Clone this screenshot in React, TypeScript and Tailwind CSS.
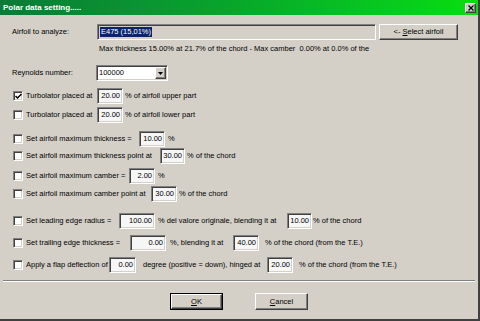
// Polar data setting dialog — classic Windows look
import React from "react";

const sunken =
  "border border-t-[#808080] border-l-[#808080] border-b-white border-r-white shadow-[inset_1px_1px_0_#404040,inset_-1px_-1px_0_#d4d0c8]";
const raised =
  "border border-t-white border-l-white border-b-[#404040] border-r-[#404040] shadow-[inset_-1px_-1px_0_#808080]";

function Check({ on = false }: { on?: boolean }) {
  return (
    <div className={`w-[10px] h-[10px] bg-white shrink-0 flex items-center justify-center ${sunken}`}>
      {on && (
        <svg width="7" height="7" viewBox="0 0 7 7">
          <path d="M0.5 3 L2.5 5 L6.5 1" stroke="#000" strokeWidth="1.5" fill="none" />
        </svg>
      )}
    </div>
  );
}

function NumBox({ value, w }: { value: string; w: number }) {
  return (
    <div
      className={`h-[16px] bg-[#f6f6f6] shrink-0 flex items-center justify-end pr-[2px] ${sunken}`}
      style={{ width: w }}
    >
      {value}
    </div>
  );
}

type Seg = { text: string; w?: number; ml?: number } | { box: string; w: number; ml?: number };

function Row({ on, label, labelW, segs, mt }: { on?: boolean; label: string; labelW: number; segs: Seg[]; mt: number }) {
  return (
    <div className="flex items-center h-[16px] pl-[13px]" style={{ marginTop: mt }}>
      <Check on={on} />
      <span className="ml-[3px] shrink-0 whitespace-nowrap" style={{ width: labelW }}>
        {label}
      </span>
      {segs.map((s, i) =>
        "box" in s ? (
          <div key={i} style={{ marginLeft: s.ml ?? 0 }}>
            <NumBox value={s.box} w={s.w} />
          </div>
        ) : (
          <span key={i} className="shrink-0 whitespace-nowrap" style={{ width: s.w, marginLeft: s.ml ?? 0 }}>
            {s.text}
          </span>
        )
      )}
    </div>
  );
}

export default function App() {
  return (
    <div
      className="w-[480px] h-[321px] bg-[#d4d0c8] text-black text-[7.5px] leading-none border-r-2 border-b-2 border-r-[#404040] border-b-[#404040] overflow-hidden flex flex-col"
      style={{ fontFamily: '"Liberation Sans", Arial, sans-serif' }}
    >
      {/* Title bar */}
      <div className="h-[15px] shrink-0 flex items-center justify-between pl-[3px] pr-[2px] bg-gradient-to-r from-[#0b7a36] via-[#07a82a] to-[#08de0c]">
        <span className="text-white font-bold text-[8px]">Polar data setting.....</span>
        <div className={`w-[11px] h-[10px] bg-[#d4d0c8] flex items-center justify-center ${raised}`}>
          <svg width="6" height="6" viewBox="0 0 6 6">
            <path d="M0.5 0.5 L5.5 5.5 M5.5 0.5 L0.5 5.5" stroke="#000" strokeWidth="1.3" />
          </svg>
        </div>
      </div>

      {/* Airfoil */}
      <div className="flex items-center h-[16px] mt-[9px] pl-[12px]">
        <span className="w-[85px] shrink-0">Airfoil to analyze:</span>
        <div className={`w-[279px] h-[16px] bg-[#d4d0c8] flex items-center pl-[2px] ${sunken}`}>
          <span className="bg-[#0a246a] text-white px-[1px] py-[1px]">E475 (15,01%)</span>
        </div>
        <div className={`ml-[3px] w-[79px] h-[16px] flex items-center justify-center ${raised}`}>
          &lt;- <span className="underline ml-[2px]">S</span>elect airfoil
        </div>
      </div>
      <div className="h-[10px] mt-[4px] pl-[99px] whitespace-nowrap flex items-center">
        Max thickness 15.00% at 21.7% of the chord - Max camber&nbsp; 0.00% at 0.0% of the
      </div>

      {/* Reynolds */}
      <div className="flex items-center h-[16px] mt-[11px] pl-[12px]">
        <span className="w-[84px] shrink-0">Reynolds number:</span>
        <div className={`w-[72px] h-[16px] bg-white flex items-center justify-between pl-[2px] pr-[1px] ${sunken}`}>
          <span>100000</span>
          <div className={`w-[11px] h-[12px] bg-[#d4d0c8] flex items-center justify-center ${raised}`}>
            <svg width="5" height="3" viewBox="0 0 5 3">
              <path d="M0 0 H5 L2.5 3 Z" fill="#000" />
            </svg>
          </div>
        </div>
      </div>

      <Row on mt={7} label="Turbolator placed at" labelW={71} segs={[{ box: "20.00", w: 26 }, { text: "% of airfoil upper part", ml: 2 }]} />
      <Row mt={3} label="Turbolator placed at" labelW={71} segs={[{ box: "20.00", w: 26 }, { text: "% of airfoil lower part", ml: 2 }]} />
      <Row mt={8} label="Set airfoil maximum thickness =" labelW={113} segs={[{ box: "10.00", w: 26 }, { text: "%", ml: 3 }]} />
      <Row mt={1} label="Set airfoil maximum thickness point at" labelW={134} segs={[{ box: "30.00", w: 25 }, { text: "% of the chord", ml: 2 }]} />
      <Row mt={4} label="Set airfoil maximum camber =" labelW={103} segs={[{ box: "2.00", w: 26 }, { text: "%", ml: 3 }]} />
      <Row mt={2} label="Set airfoil maximum camber point at" labelW={125} segs={[{ box: "30.00", w: 26 }, { text: "% of the chord", ml: 2 }]} />
      <Row
        mt={11}
        label="Set leading edge radius ="
        labelW={93}
        segs={[
          { box: "100.00", w: 36 },
          { text: "% del valore originale, blending it at", w: 129, ml: 3 },
          { box: "10.00", w: 25 },
          { text: "% of the chord", ml: 1 },
        ]}
      />
      <Row
        mt={6}
        label="Set trailing edge thickness ="
        labelW={104}
        segs={[
          { box: "0.00", w: 36 },
          { text: "%, blending it at", w: 63, ml: 4 },
          { box: "40.00", w: 26 },
          { text: "% of the chord (from the T.E.)", ml: 6 },
        ]}
      />
      <Row
        mt={6}
        label="Apply a flap deflection of"
        labelW={83}
        segs={[
          { box: "0.00", w: 27 },
          { text: "degree (positive = down), hinged at", w: 124, ml: 7 },
          { box: "20.00", w: 26 },
          { text: "% of the chord (from the T.E.)", ml: 6 },
        ]}
      />

      {/* Separator */}
      <div className="mt-[7px] ml-[3px] w-[472px] h-[2px] border-t border-t-[#808080] border-b border-b-white" />

      {/* Buttons */}
      <div className="flex mt-[11px] pl-[170px]">
        <div className="w-[53px] h-[17px] border border-black">
          <div className={`w-full h-full flex items-center justify-center ${raised}`}>
            <span className="underline">O</span>K
          </div>
        </div>
        <div className={`ml-[32px] w-[53px] h-[17px] flex items-center justify-center ${raised}`}>
          <span className="underline">C</span>ancel
        </div>
      </div>
    </div>
  );
}
